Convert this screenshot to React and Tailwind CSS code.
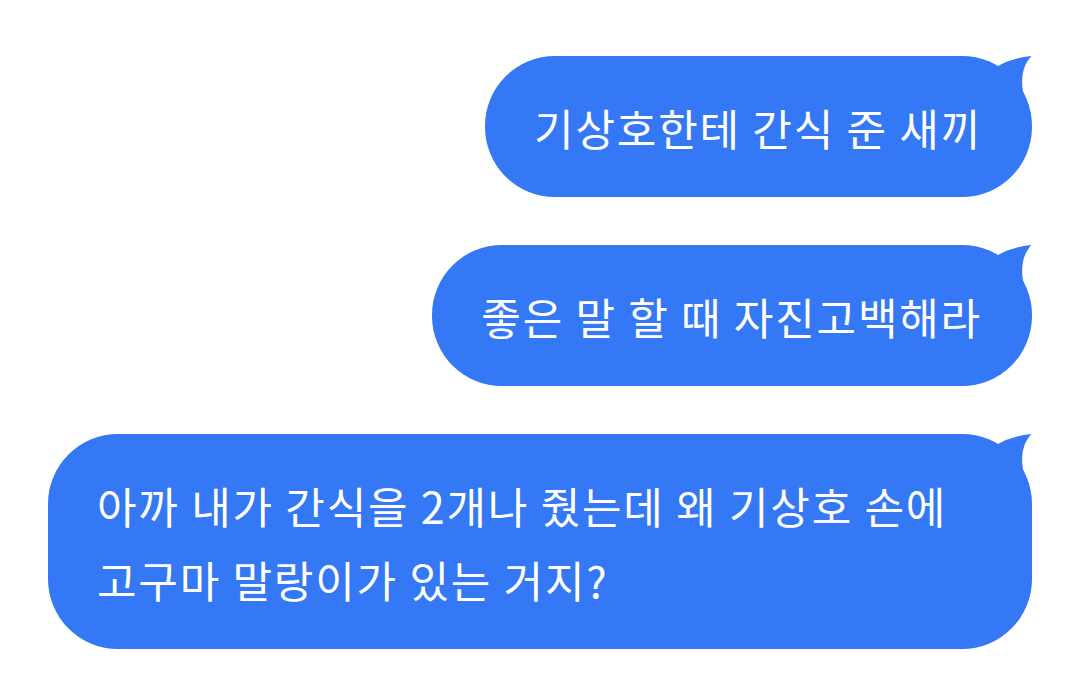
import React from 'react';

const messages = [
  { id: 1, text: '기상호한테 간식 준 새끼', w: '' },
  { id: 2, text: '좋은 말 할 때 자진고백해라', w: '' },
  { id: 3, text: '아까 내가 간식을 2개나 줬는데 왜 기상호 손에 고구마 말랑이가 있는 거지?', w: 'w-[984px]' }
];

function Tail() {
  return (
    <svg
      className="absolute top-0 right-0"
      width="50"
      height="60"
      viewBox="0 0 50 60"
    >
      <path d="M16,10 Q30,2 49.5,0 C40,10 35,28 48,58 L10,60 Z" fill="#3478F6" />
    </svg>
  );
}

export default function App() {
  return (
    <div
      className="w-[1080px] h-[683px] bg-white flex flex-col items-end gap-[48px] pt-[56px] pr-[48px]"
      style={{ fontFamily: '"Noto Sans CJK KR", "Noto Sans", sans-serif' }}
    >
      {messages.map((m) => (
        <div
          key={m.id}
          className={`relative bg-[#3478F6] text-white text-[43px] tracking-[1.8px] leading-[74px] rounded-[70px] pl-[49px] pr-[50px] py-[33.5px] ${m.w}`}
        >
          <Tail />
          <span className="relative">{m.text}</span>
        </div>
      ))}
    </div>
  );
}
